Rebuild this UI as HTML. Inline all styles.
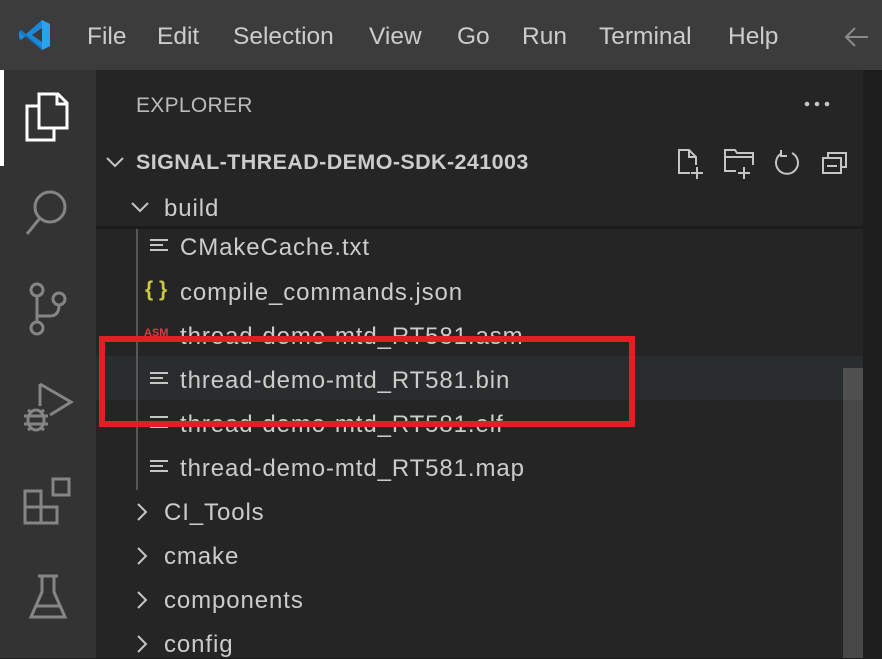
<!DOCTYPE html>
<html><head><meta charset="utf-8"><style>
*{margin:0;padding:0;box-sizing:border-box}
body{width:882px;height:658px;overflow:hidden;background:#1e1e1e;font-family:"Liberation Sans",sans-serif;color:#cccccc;position:relative}
.abs{position:absolute}
.title{left:0;top:0;width:882px;height:70px;background:#3c3c3c}
.menu{top:23px;font-size:24.5px;color:#cccccc;white-space:nowrap}
.act{left:0;top:70px;width:96px;height:588px;background:#333333}
.side{left:96px;top:70px;width:767px;height:588px;background:#252526}
.t{font-size:24px;color:#cccccc;white-space:nowrap;letter-spacing:0.9px}
.lines{width:18px;height:14px}
.lines i{display:block;height:2px;background:#c5c5c5;margin-bottom:3px}
</style></head><body>
<div class="abs title"></div>
<svg class="abs" style="left:18px;top:18px" width="34" height="34" viewBox="0 0 34 34">
<path d="M24 2 L32 6 V28 L24 32 L8 18 L3 22 L1 20 V14 L3 12 L8 16 Z" fill="#1e88d8"/>
<path d="M24 2 L32 6 V28 L24 32 Z" fill="#2aa3ef"/>
<path d="M24 10 L14 17 L24 24 Z" fill="#3c3c3c"/>
<path d="M3 12 L24 30 L24 32 L1 14 Z" fill="#0d6fb8" opacity=".6"/>
</svg>
<div class="abs menu" style="left:87px">File</div>
<div class="abs menu" style="left:157px">Edit</div>
<div class="abs menu" style="left:233px">Selection</div>
<div class="abs menu" style="left:369px">View</div>
<div class="abs menu" style="left:457px">Go</div>
<div class="abs menu" style="left:522px">Run</div>
<div class="abs menu" style="left:599px">Terminal</div>
<div class="abs menu" style="left:728px">Help</div>
<svg class="abs" style="left:842px;top:25px" width="30" height="24"><path d="M26 12H4M13 3L4 12L13 21" stroke="#8a8a8a" stroke-width="2" fill="none"/></svg>

<div class="abs act"></div>
<div class="abs" style="left:0;top:70px;width:4px;height:96px;background:#fff"></div>
<svg class="abs" style="left:24px;top:92px" width="48" height="52" viewBox="0 0 48 52" fill="none" stroke="#fff" stroke-width="3">
<path d="M15 10 V2 H34 L43 11 V36 H15 Z"/><path d="M33 2 V12 H43"/><path d="M15 14 H3 V48 H30 V36"/>
</svg>
<svg class="abs" style="left:24px;top:188px" width="50" height="50" fill="none" stroke="#858585" stroke-width="3"><circle cx="26" cy="19" r="15"/><path d="M16 30 L3 46"/></svg>
<svg class="abs" style="left:26px;top:282px" width="44" height="54" fill="none" stroke="#858585" stroke-width="3"><circle cx="11" cy="8" r="6"/><circle cx="11" cy="46" r="6"/><circle cx="33" cy="17" r="6"/><path d="M11 14 V40 M11 34 H24 Q33 34 33 23"/></svg>
<svg class="abs" style="left:22px;top:380px" width="52" height="52" fill="none" stroke="#858585" stroke-width="3"><path d="M18 4 V26 M18 4 L49 22 L28 35"/><ellipse cx="14" cy="40" rx="8" ry="10"/><path d="M2 36 H26 M2 44 H26 M6 30 L10 33 M22 30 L18 33 M6 50 L10 47 M22 50 L18 47"/></svg>
<svg class="abs" style="left:22px;top:476px" width="50" height="50" fill="none" stroke="#858585" stroke-width="3"><rect x="3" y="15" width="16" height="16"/><rect x="3" y="31" width="16" height="16"/><rect x="19" y="31" width="16" height="16"/><rect x="31" y="3" width="16" height="16"/></svg>
<svg class="abs" style="left:28px;top:574px" width="40" height="46" fill="none" stroke="#858585" stroke-width="3"><path d="M10 2 H30 M14 2 V18 L3 43 H37 L26 18 V2 M8 32 H32"/></svg>

<div class="abs side"></div>
<div class="abs" style="left:96px;top:356px;width:767px;height:44px;background:#2a2d2e"></div>
<div class="abs" style="left:96px;top:226px;width:767px;height:3px;background:#1a1a1a;opacity:.8"></div>
<div class="abs" style="left:136px;top:229px;width:2px;height:261px;background:#585858"></div>
<div class="abs" style="left:843px;top:368px;width:20px;height:290px;background:#474747"></div>
<div class="abs" style="left:843px;top:368px;width:20px;height:32px;background:#4f4f4f"></div>

<div class="abs t" style="left:136px;top:94px;font-size:21px;color:#bbbbbb;letter-spacing:0.3px">EXPLORER</div>
<svg class="abs" style="left:800px;top:98px" width="34" height="12" fill="#c5c5c5"><circle cx="7" cy="6" r="2.3"/><circle cx="17" cy="6" r="2.3"/><circle cx="27" cy="6" r="2.3"/></svg>
<svg class="abs" style="left:104px;top:154px" width="22" height="16" fill="none" stroke="#c5c5c5" stroke-width="2"><path d="M3 4 L11 12 L19 4"/></svg>
<div class="abs t" style="left:136px;top:150px;font-weight:bold;font-size:21.5px;letter-spacing:0.4px">SIGNAL-THREAD-DEMO-SDK-241003</div>
<svg class="abs" style="left:676px;top:147px" width="180" height="32" fill="none" stroke="#c5c5c5" stroke-width="2">
<path d="M14 26 H3 V3 H13 L20 10 V18 M13 3 V10 H20 M21 20 V32 M15 26 H27"/>
<path d="M60 24 H49 V3 H59 L61 6 H77 V18 M49 10 H77 M68 20 V32 M62 26 H74"/>
<path d="M106 6 A11 11 0 1 0 116 6 M105 3 V9 H111" />
<rect x="147" y="11" width="18" height="15"/><path d="M152 11 V6 H170 V20 H165 M151 19 H161"/>
</svg>
<svg class="abs" style="left:130px;top:199px" width="20" height="16" fill="none" stroke="#c5c5c5" stroke-width="2"><path d="M2 4 L10 12 L18 4"/></svg>
<div class="abs t" style="left:164px;top:195px">build</div>

<div class="abs lines" style="left:150px;top:239px"><i></i><i style="width:70%"></i><i></i></div>
<div class="abs t" style="left:180px;top:234px">CMakeCache.txt</div>
<div class="abs" style="left:145px;top:278px;color:#cbcb41;font-size:21px;font-weight:bold">{ }</div>
<div class="abs t" style="left:180px;top:279px">compile_commands.json</div>
<div class="abs" style="left:144px;top:327px;color:#d04040;font-size:11px;font-weight:bold">ASM</div>
<div class="abs t" style="left:180px;top:323px">thread-demo-mtd_RT581.asm</div>
<div class="abs lines" style="left:150px;top:372px"><i></i><i style="width:70%"></i><i></i></div>
<div class="abs t" style="left:180px;top:367px">thread-demo-mtd_RT581.bin</div>
<div class="abs lines" style="left:150px;top:416px"><i></i><i style="width:70%"></i><i></i></div>
<div class="abs t" style="left:180px;top:411px">thread-demo-mtd_RT581.elf</div>
<div class="abs lines" style="left:150px;top:460px"><i></i><i style="width:70%"></i><i></i></div>
<div class="abs t" style="left:180px;top:455px">thread-demo-mtd_RT581.map</div>

<svg class="abs" style="left:134px;top:501px" width="16" height="22" fill="none" stroke="#c5c5c5" stroke-width="2"><path d="M4 3 L12 11 L4 19"/></svg>
<div class="abs t" style="left:164px;top:499px">CI_Tools</div>
<svg class="abs" style="left:134px;top:545px" width="16" height="22" fill="none" stroke="#c5c5c5" stroke-width="2"><path d="M4 3 L12 11 L4 19"/></svg>
<div class="abs t" style="left:164px;top:543px">cmake</div>
<svg class="abs" style="left:134px;top:589px" width="16" height="22" fill="none" stroke="#c5c5c5" stroke-width="2"><path d="M4 3 L12 11 L4 19"/></svg>
<div class="abs t" style="left:164px;top:587px">components</div>
<svg class="abs" style="left:134px;top:633px" width="16" height="22" fill="none" stroke="#c5c5c5" stroke-width="2"><path d="M4 3 L12 11 L4 19"/></svg>
<div class="abs t" style="left:164px;top:631px">config</div>

<div class="abs" style="left:99px;top:336px;width:536px;height:91px;border:6px solid #e31e24"></div>
</body></html>
